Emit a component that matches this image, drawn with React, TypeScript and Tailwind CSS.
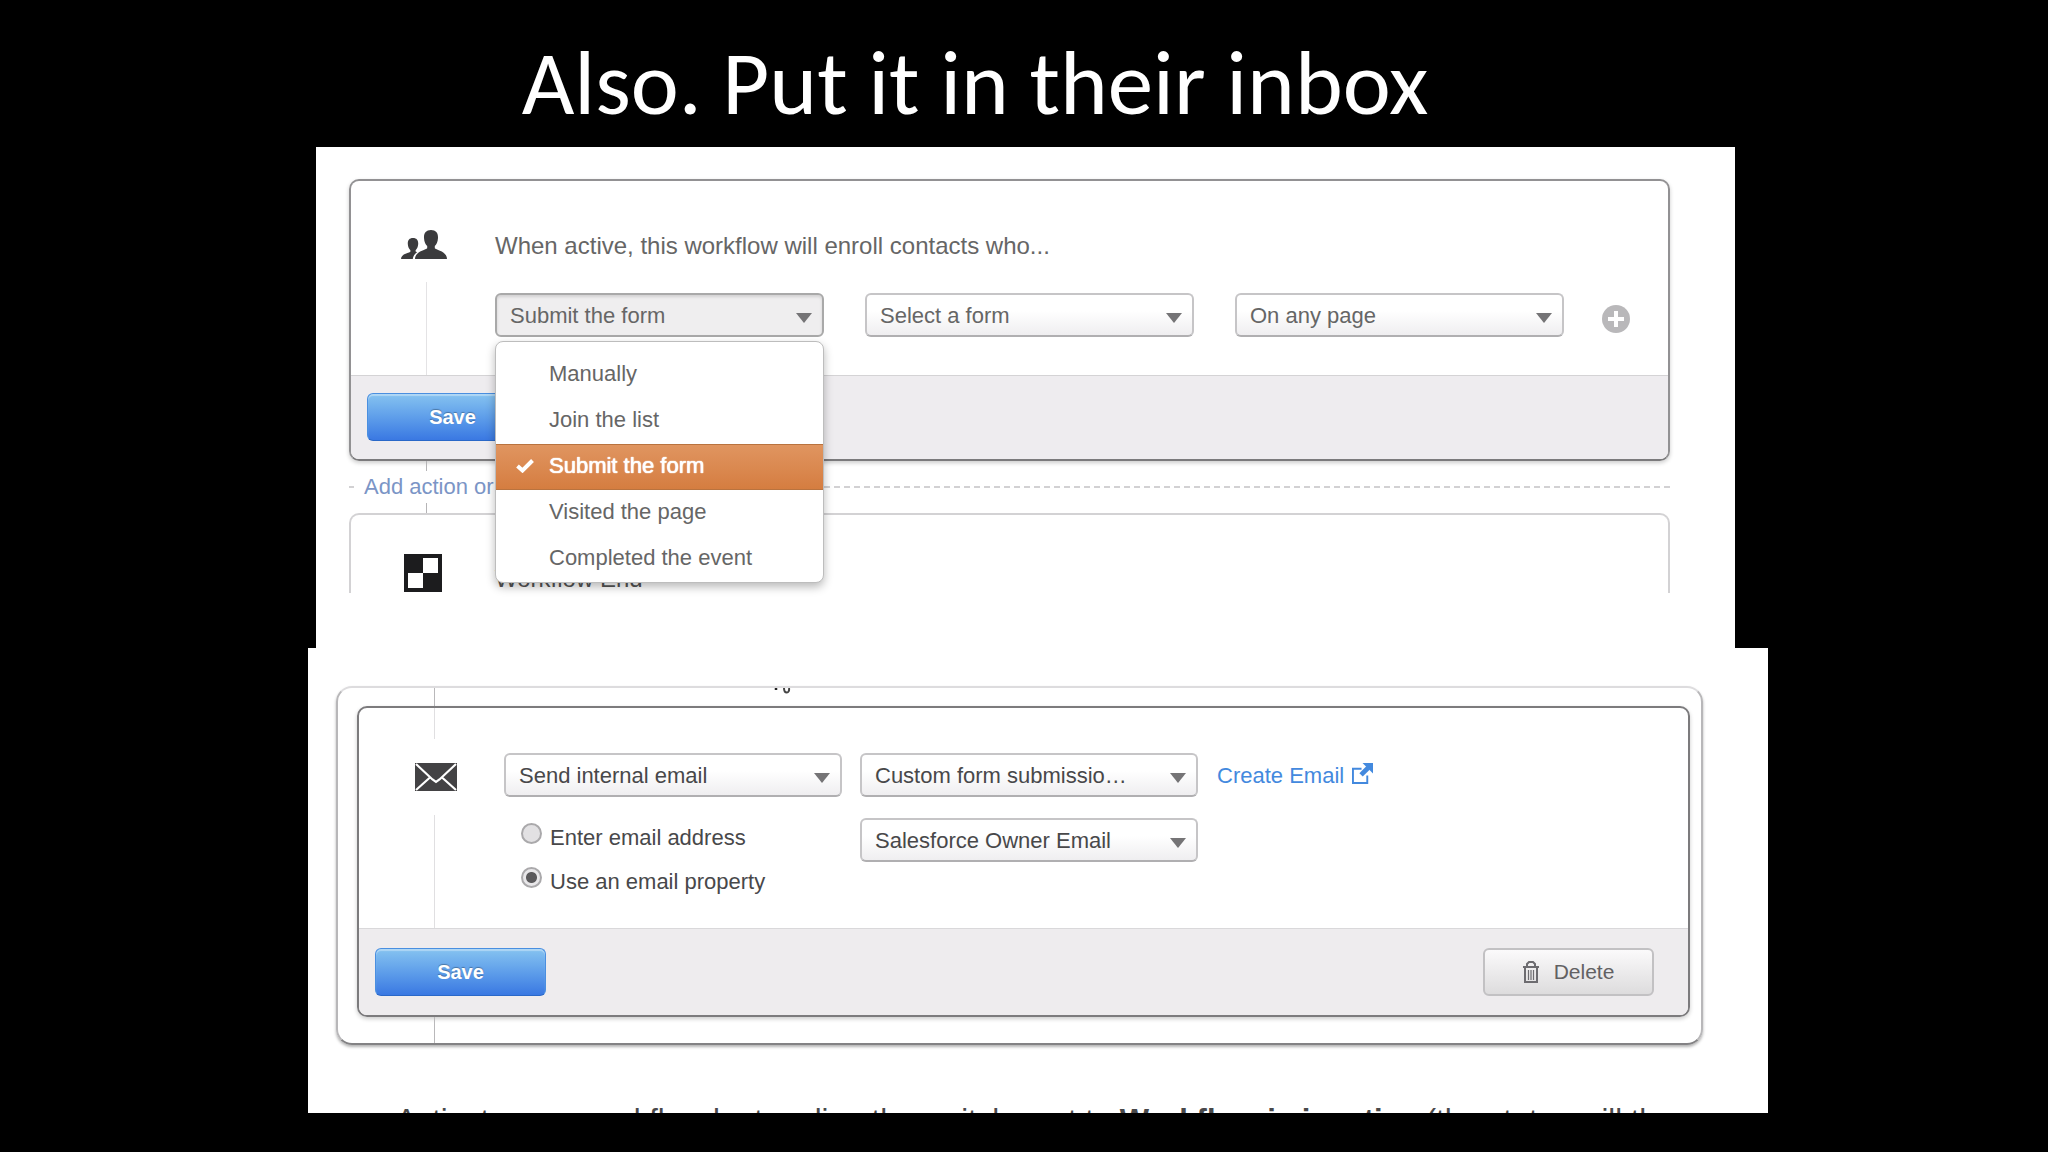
import React from 'react';

const enrollOptions = [
  'Manually',
  'Join the list',
  'Submit the form',
  'Visited the page',
  'Completed the event',
];

function Select({ label, options, value, open = false, dark = false }: {
  label: string;
  options: string[];
  value: string;
  open?: boolean;
  dark?: boolean;
}) {
  return (
    <div className="relative w-full">
      <select
        aria-label={label}
        defaultValue={value}
        className={`block w-full h-11 appearance-none rounded-md border-2 pl-[13px] pr-10 text-[22px] outline-none ${
          open
            ? 'border-[#a9a9a9] bg-[#efeeef] shadow-[inset_0_2px_3px_rgba(0,0,0,0.12)]'
            : 'border-[#c6c5c7] border-b-[#b0afb1] bg-linear-to-b from-white from-40% to-[#efeef0]'
        } ${dark ? 'text-[#48484a]' : 'text-[#666]'}`}
      >
        {options.map((option) => (
          <option key={option}>{option}</option>
        ))}
      </select>
      <svg viewBox="0 0 16 10" className="absolute right-3 top-5 w-4 h-2.5 pointer-events-none" fill="#757476">
        <path d="M0 0h16L8 10z" />
      </svg>
    </div>
  );
}

function EnrollMenu() {
  return (
    <ul
      role="listbox"
      aria-label="Enrollment trigger"
      className="absolute z-10 left-0 right-0 top-12 pt-2.5 rounded-lg border border-[#bdbdbd] bg-white overflow-hidden shadow-[0_4px_10px_rgba(0,0,0,0.28)]"
    >
      {enrollOptions.map((option) => {
        const selected = option === 'Submit the form';
        return (
          <li
            key={option}
            role="option"
            aria-selected={selected}
            className={`flex items-center h-[46px] pl-5 pb-0.5 text-[22px] leading-8 ${
              selected
                ? 'text-white bg-linear-to-b from-[#e09560] to-[#d57d40] border-y border-[#b9733f] [text-shadow:0_0_1px_#fff,0_0_1px_#fff]'
                : 'text-[#666]'
            }`}
          >
            <span className="w-[33px]">
              {selected && (
                <svg viewBox="0 0 18 14" className="w-[18px] h-3.5" fill="none" stroke="#fff" strokeWidth="4">
                  <path d="M1.5 7l5 4.500L16.500 1.500" />
                </svg>
              )}
            </span>
            {option}
          </li>
        );
      })}
    </ul>
  );
}

function SaveButton() {
  return (
    <button
      type="button"
      className="w-[171px] h-12 rounded-md border border-[#4a8fe0] border-b-[#2a68c8] bg-linear-to-b from-[#86c3f0] to-[#3a78e2] text-white text-[20px] font-bold shadow-[inset_0_2px_1px_rgba(255,255,255,0.35)] [text-shadow:0_-1px_1px_rgba(0,0,0,0.3)]"
    >
      Save
    </button>
  );
}

function PeopleIcon() {
  return (
    <svg viewBox="0 0 46 29" className="w-[46px] h-[29px]" fill="#3b3b3d">
      <path d="M30 0c5 0 7.200 3.200 7 8-.2 4-1.600 6.400-3.200 8v2.200c1 1.600 12 2.800 12.200 10.800H14c.2-8 11.200-9.200 12.200-10.800V16c-1.600-1.600-3-4-3.200-8C22.800 3.200 25 0 30 0z" />
      <path d="M12 8c3.800 0 5.400 2.400 5.200 6-.2 2.800-1.200 4.900-2.600 6.200v1.200l1.600.8c-2.500 1.600-4 3.800-4.400 6.800H0c.2-5.500 8.400-6 9.400-7.300v-1.500C8 18.900 7 16.800 6.800 14c-.2-3.600 1.400-6 5.200-6z" />
    </svg>
  );
}

function CheckeredIcon() {
  return (
    <svg viewBox="0 0 38 38" className="w-[38px] h-[38px]">
      <path fill="#1c1c1e" d="M0 0h38v38H0z" />
      <path fill="#fff" d="M19 4h15v15H19zM4 19h15v15H4z" />
    </svg>
  );
}

function EnvelopeIcon() {
  return (
    <svg viewBox="0 0 42 28" className="w-[42px] h-7">
      <path fill="#434244" d="M0 0h42v28H0z" />
      <path fill="none" stroke="#fff" strokeWidth="2.200" d="M1 1l16.500 15.500L21 19l3.500-2.500L41 1M1 27l14.500-13M41 27L26.500 14" />
    </svg>
  );
}

function EnrollPanel() {
  return (
    <section className="ml-2 mr-[33px] pt-8 pl-[33px] pr-[65px] pb-[55px] bg-white">
      <div className="rounded-[10px] border-2 border-[#929193] border-b-[#7b7a7c] shadow-[0_2px_4px_rgba(0,0,0,0.2)]">
        <div className="flex">
          <div className="w-36 shrink-0 flex flex-col pt-[49px]">
            <div className="pl-[50px]">
              <PeopleIcon />
            </div>
            <div className="flex-1 w-px ml-[75px] mt-[23px] bg-[#e4e3e5]" />
          </div>
          <div className="flex-1 pt-[49px] pb-[38px]">
            <p className="text-[24px] leading-8 text-[#666]">
              When active, this workflow will enroll contacts who...
            </p>
            <div className="flex items-center mt-[31px] pr-[22px]">
              <div className="flex flex-1 gap-[41px]">
                <div className="relative flex-1">
                  <Select label="Enrollment trigger" options={enrollOptions} value="Submit the form" open />
                  <EnrollMenu />
                </div>
                <div className="flex-1">
                  <Select label="Form" options={['Select a form']} value="Select a form" />
                </div>
                <div className="flex-1">
                  <Select label="Page" options={['On any page']} value="On any page" />
                </div>
              </div>
              <button type="button" aria-label="Add condition" className="ml-[38px] mt-2 mr-4">
                <svg viewBox="0 0 28 28" className="block w-7 h-7">
                  <circle cx="14" cy="14" r="14" fill="#b9b8ba" />
                  <path d="M14 6v16M6 14h16" stroke="#fff" strokeWidth="4" />
                </svg>
              </button>
            </div>
          </div>
        </div>
        <div className="border-t border-[#d4d3d5] bg-[#eeecef] rounded-b-lg px-4 pt-[17px] pb-[18px] flex">
          <SaveButton />
        </div>
      </div>

      <div className="w-px h-2.5 ml-[77px] bg-[#b5b4b6]" />
      <div className="flex items-center">
        <span className="w-[5px] h-0.5 bg-[#d2d1d3]" />
        <a href="#add" className="ml-2.5 mr-3 text-[22px] leading-8 text-[#7b95c6]">Add action or delay</a>
        <span className="flex-1 h-0.5 bg-[repeating-linear-gradient(to_right,#d2d1d3_0_6px,transparent_6px_10px)]" />
      </div>
      <div className="w-px h-2.5 ml-[77px] bg-[#b5b4b6]" />

      <div className="flex h-20 overflow-hidden rounded-t-[10px] border-2 border-b-0 border-[#d3d2d4]">
        <div className="w-36 shrink-0 pl-[53px] pt-[39px]">
          <CheckeredIcon />
        </div>
        <p className="pt-12 text-[24px] leading-8 text-[#555]">Workflow End</p>
      </div>
    </section>
  );
}

function EmailPanel() {
  return (
    <section className="pt-[38px] pl-7 pr-[65px] bg-white">
      <div className="relative rounded-2xl border-2 border-[#b8b7b9] border-t-[#dddcde] border-b-[#838284] pl-[19px] pr-[11px] shadow-[0_2px_3px_rgba(0,0,0,0.3)]">
        <svg viewBox="0 0 18 6" className="absolute left-[32%] top-0 w-[18px] h-1.5">
          <path d="M2 0v2" stroke="#222" strokeWidth="2.500" />
          <path d="M10 0c0 6 6 6 5 0" stroke="#444" strokeWidth="2" fill="none" />
        </svg>
        <div className="w-px h-[18px] ml-[77px] bg-[#b9b8ba]" />
        <div className="rounded-[10px] border-2 border-[#7c7b7d] shadow-[0_2px_4px_rgba(0,0,0,0.2)]">
          <div className="flex">
            <div className="w-[145px] shrink-0 flex flex-col">
              <div className="w-px h-[31px] ml-[75px] bg-[#e0dfe1]" />
              <div className="pl-14 py-6">
                <EnvelopeIcon />
              </div>
              <div className="flex-1 w-px ml-[75px] bg-[#e0dfe1]" />
            </div>
            <div className="grid grid-cols-[338px_338px_auto] gap-x-[18px] gap-y-[21px] pt-[45px] pb-[30px]">
              <Select label="Action" options={['Send internal email']} value="Send internal email" dark />
              <Select label="Email" options={['Custom form submissio…']} value="Custom form submissio…" dark />
              <a href="#create" className="flex items-center gap-2 pt-0.5 pl-px text-[22px] leading-8 text-[#4389de]">
                Create Email
                <svg viewBox="0 0 22 22" className="w-[21px] h-[21px] mb-1.5" fill="none" stroke="#4389de" strokeWidth="2">
                  <path d="M10 6H1v15h15v-8" />
                  <path d="M9.500 12.500L17 5" strokeWidth="5" />
                  <path d="M11 0h11v11z" fill="#4389de" stroke="none" />
                </svg>
              </a>
              <div className="flex flex-col gap-3 pt-1 pl-[17px] text-[22px] leading-8 text-[#48484a]">
                <label className="flex items-start gap-2">
                  <input
                    type="radio"
                    name="recipient"
                    className="appearance-none w-[21px] h-[21px] mt-px rounded-full border-2 border-[#aaa9ab] bg-[#e2e1e3]"
                  />
                  Enter email address
                </label>
                <label className="flex items-start gap-2">
                  <input
                    type="radio"
                    name="recipient"
                    defaultChecked
                    className="appearance-none w-[21px] h-[21px] mt-px rounded-full border-2 border-[#aaa9ab] bg-[radial-gradient(circle,#5b5a5c_0_5px,#e8e7e9_6px)]"
                  />
                  Use an email property
                </label>
              </div>
              <Select label="Email property" options={['Salesforce Owner Email']} value="Salesforce Owner Email" dark />
            </div>
          </div>
          <div className="flex justify-between border-t border-[#d9d8da] bg-[#eeecee] rounded-b-lg pl-4 pr-[34px] pt-[19px] pb-[19px]">
            <SaveButton />
            <button
              type="button"
              className="flex items-center justify-center gap-[15px] w-[171px] h-12 rounded-md border-2 border-[#c2c1c3] bg-linear-to-b from-[#fbfafb] to-[#dddcdd] text-[#626163] text-[21px]"
            >
              <svg viewBox="0 0 16 22" className="w-4 h-[22px]" fill="none" stroke="#6d6c70" strokeWidth="2">
                <path d="M0 6h16M4 6V3l2-2h4l2 2v3M2 6v15h12V6" />
                <path d="M5.500 9v10M8 9v10M10.500 9v10" strokeWidth="1.200" />
              </svg>
              Delete
            </button>
          </div>
        </div>
        <div className="w-px h-[26px] ml-[77px] bg-[#b9b8ba]" />
      </div>
      <p className="mt-[54px] pl-[60px] h-3.5 overflow-hidden whitespace-nowrap text-[31px] leading-[44px] text-[#48484a]">
        Activate your workflow by toggling the switch next to <b>Workflow is inactive</b> (the status will then
      </p>
    </section>
  );
}

export default function App() {
  return (
    <main className="min-h-screen bg-black font-['Liberation_Sans',Arial,sans-serif]">
      <h1 className="pt-[35px] pr-[98px] h-[147px] text-center text-white text-[91px] leading-[96px] font-['Carlito','Lato',sans-serif]">
        Also. Put it in their inbox
      </h1>
      <div className="ml-[308px] mr-[280px]">
        <EnrollPanel />
        <EmailPanel />
      </div>
    </main>
  );
}
